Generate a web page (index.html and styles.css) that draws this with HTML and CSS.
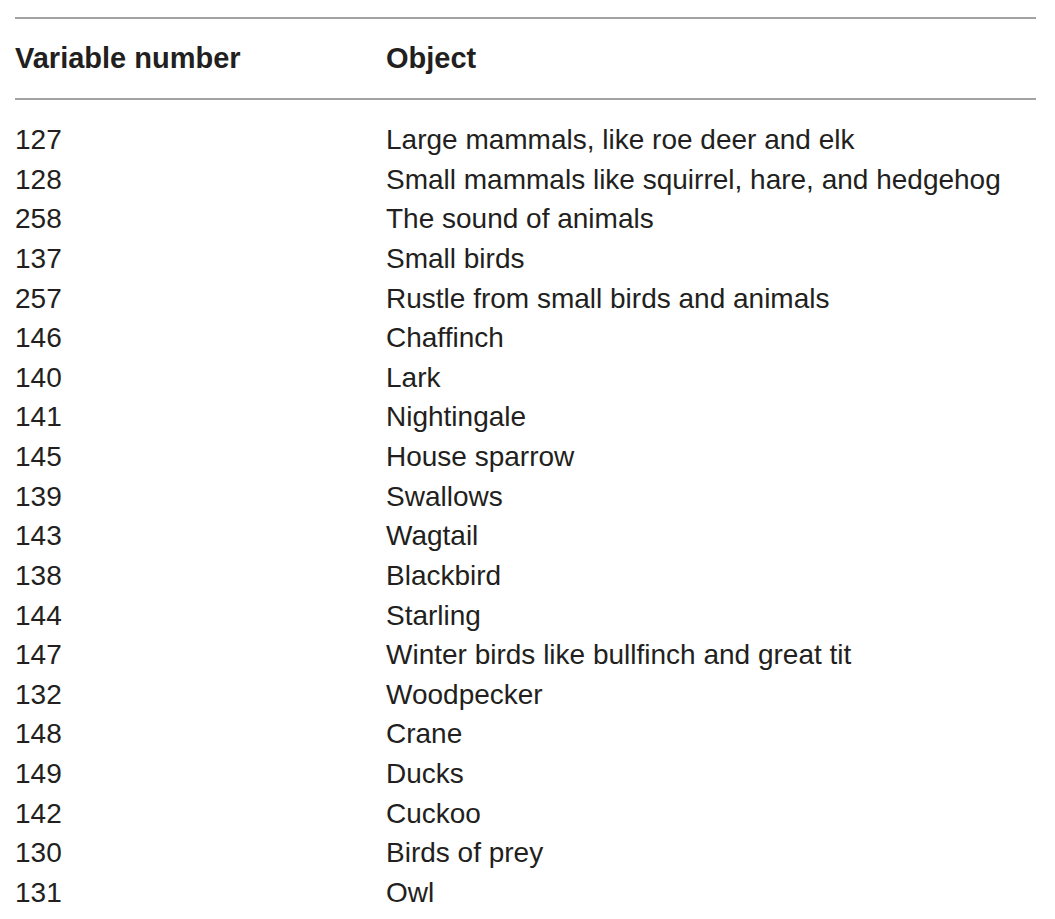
FILE: index.html
```html
<!DOCTYPE html>
<html>
<head>
<meta charset="utf-8">
<link rel="stylesheet" href="styles.css">
</head>
<body>
<table class="data">
  <thead>
    <tr><th class="c1">Variable number</th><th class="c2">Object</th></tr>
  </thead>
  <tbody>
    <tr><td>127</td><td>Large mammals, like roe deer and elk</td></tr>
    <tr><td>128</td><td>Small mammals like squirrel, hare, and hedgehog</td></tr>
    <tr><td>258</td><td>The sound of animals</td></tr>
    <tr><td>137</td><td>Small birds</td></tr>
    <tr><td>257</td><td>Rustle from small birds and animals</td></tr>
    <tr><td>146</td><td>Chaffinch</td></tr>
    <tr><td>140</td><td>Lark</td></tr>
    <tr><td>141</td><td>Nightingale</td></tr>
    <tr><td>145</td><td>House sparrow</td></tr>
    <tr><td>139</td><td>Swallows</td></tr>
    <tr><td>143</td><td>Wagtail</td></tr>
    <tr><td>138</td><td>Blackbird</td></tr>
    <tr><td>144</td><td>Starling</td></tr>
    <tr><td>147</td><td>Winter birds like bullfinch and great tit</td></tr>
    <tr><td>132</td><td>Woodpecker</td></tr>
    <tr><td>148</td><td>Crane</td></tr>
    <tr><td>149</td><td>Ducks</td></tr>
    <tr><td>142</td><td>Cuckoo</td></tr>
    <tr><td>130</td><td>Birds of prey</td></tr>
    <tr><td>131</td><td>Owl</td></tr>
  </tbody>
</table>
</body>
</html>
```
FILE: styles.css
```css
html, body {
  margin: 0;
  padding: 0;
  background: #fff;
}
body {
  padding: 17px 19px 0 15px;
  font-family: "Liberation Sans", Arial, sans-serif;
  color: #231f20;
}
.data {
  width: 100%;
  border-collapse: collapse;
  font-size: 28px;
}
.data th {
  text-align: left;
  font-weight: bold;
  font-size: 29px;
  height: 79px;
  padding: 0;
  border-top: 2px solid #a3a3a3;
  border-bottom: 2px solid #a3a3a3;
  vertical-align: middle;
}
.data th.c1 { width: 371px; }
.data td {
  padding: 0;
  height: 39.63px;
  line-height: 39.63px;
  vertical-align: middle;
}
.data tbody tr:first-child td { padding-top: 20px; }
```
